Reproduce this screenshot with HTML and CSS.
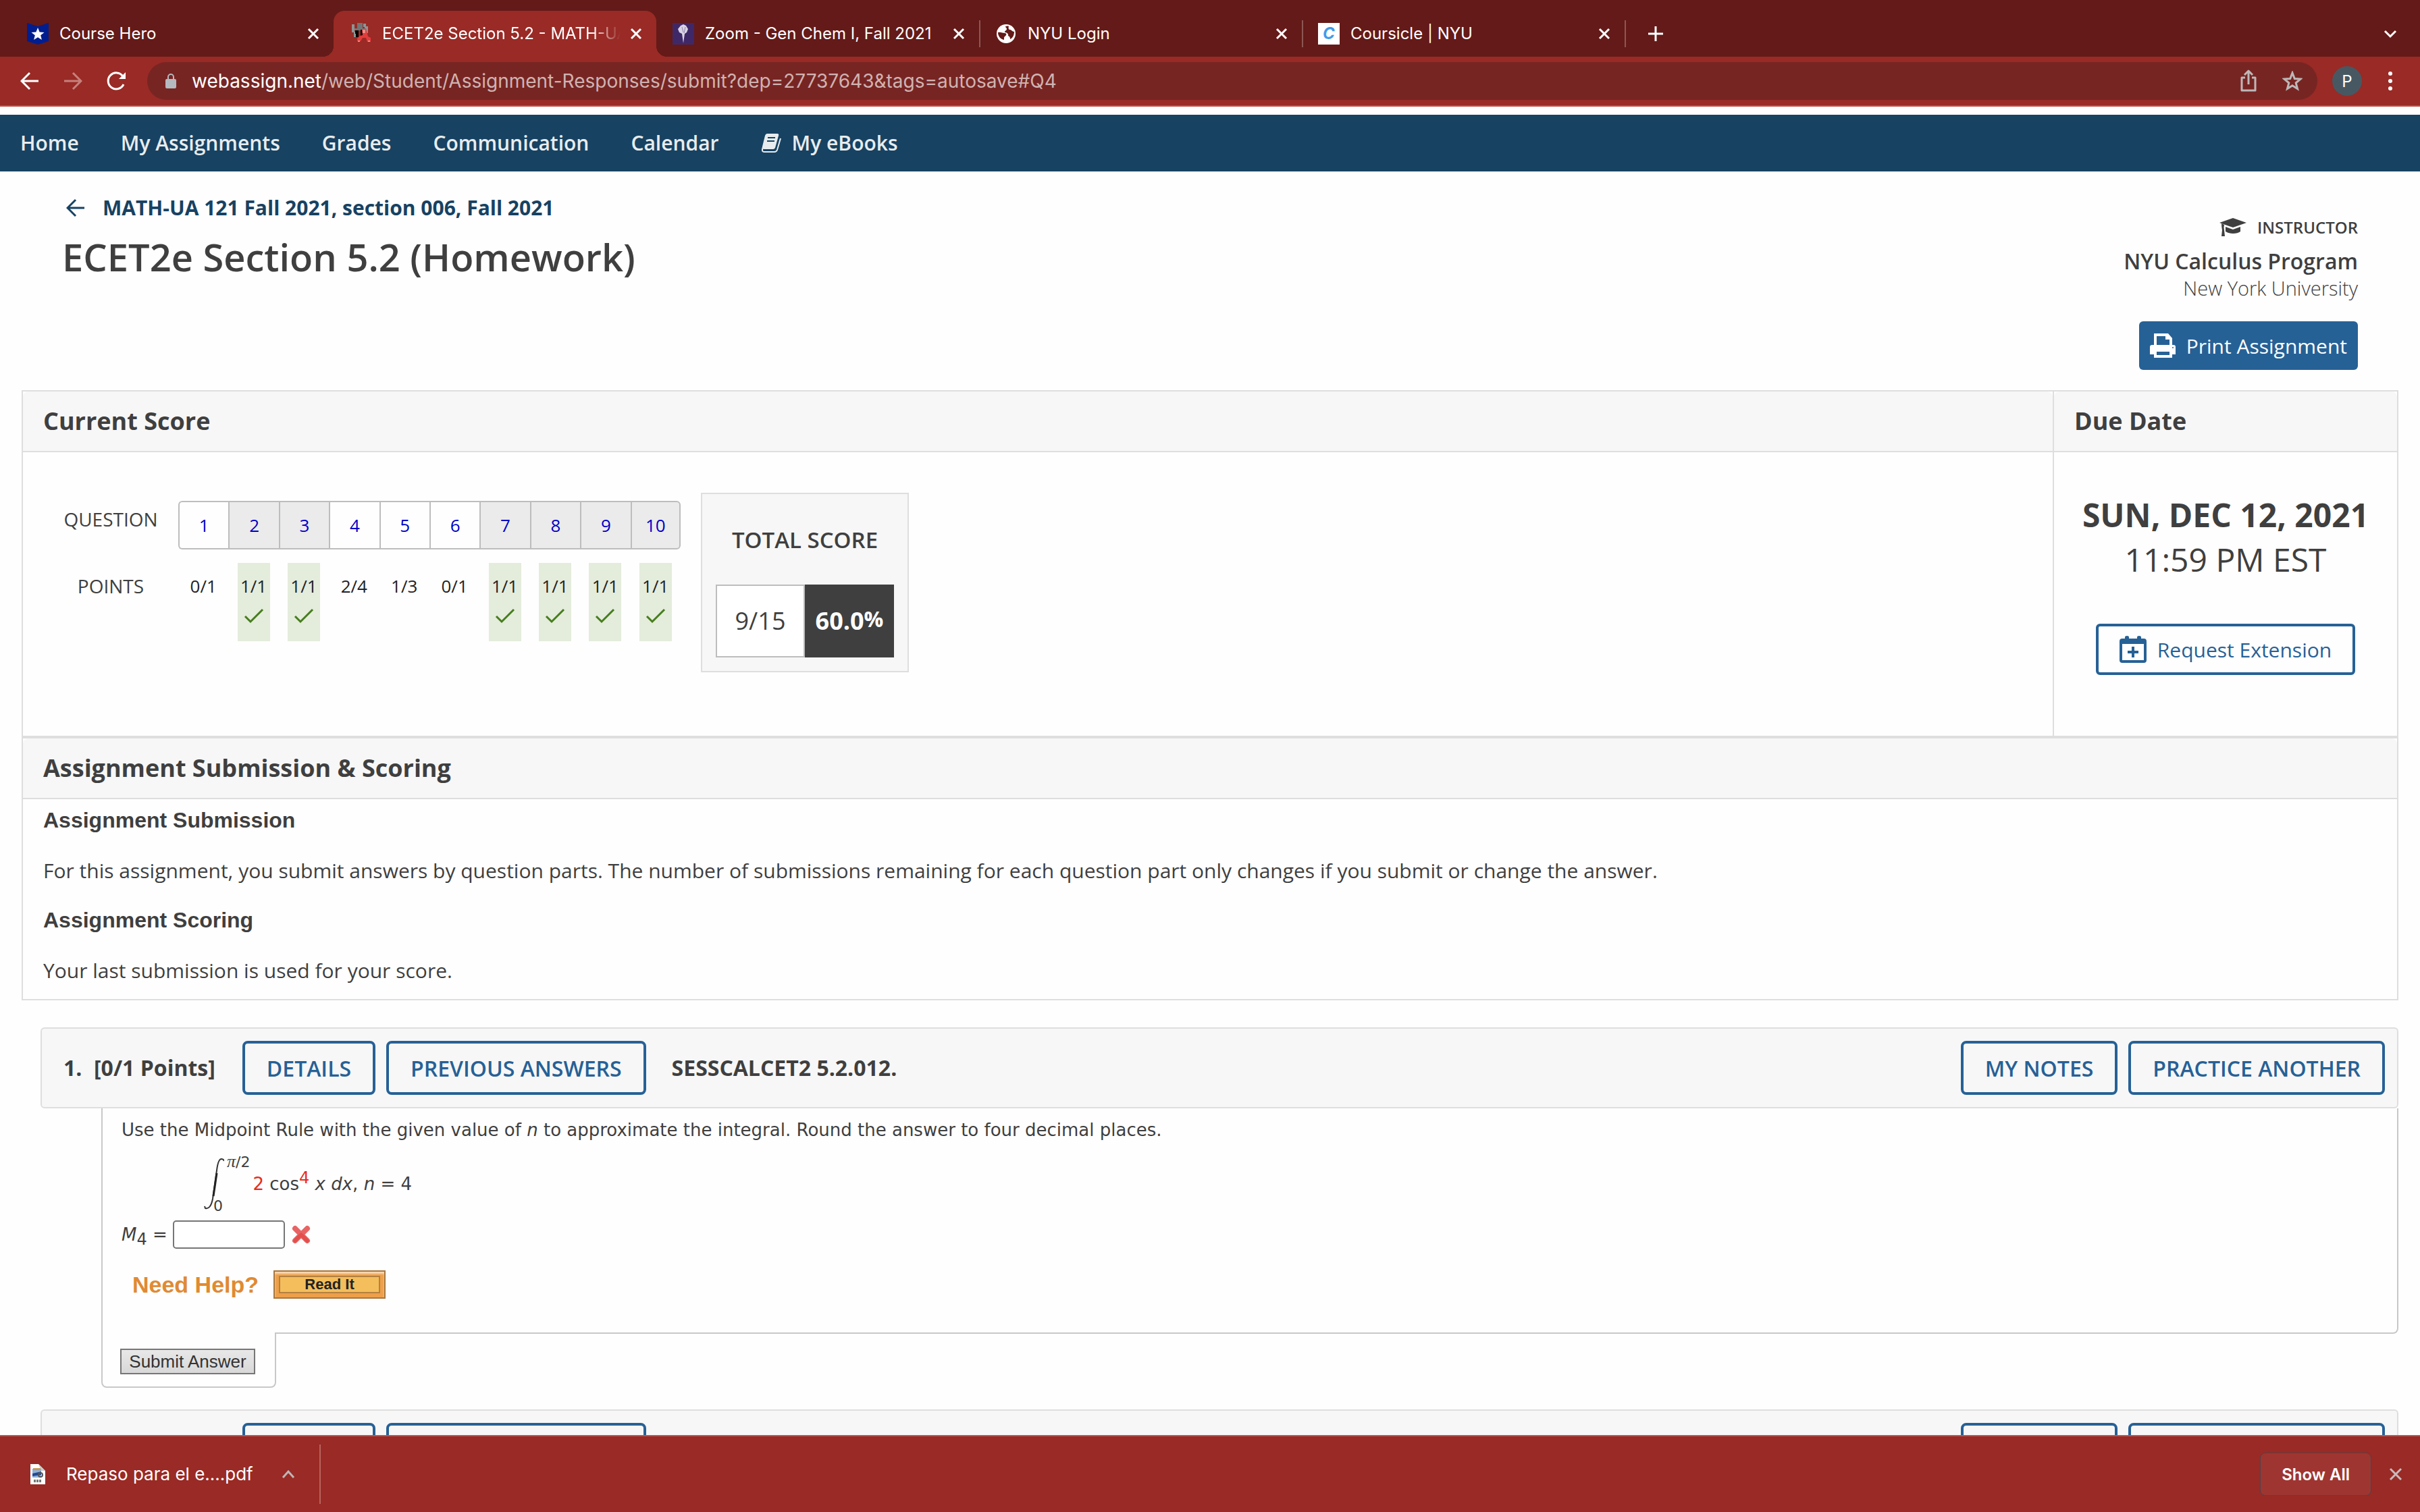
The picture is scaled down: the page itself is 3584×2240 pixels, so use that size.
FILE: index.html
```html
<!DOCTYPE html>
<html lang="en">
<head>
<meta charset="utf-8">
<title>ECET2e Section 5.2 - MATH-UA 121 Fall 2021</title>
<link rel="stylesheet" href="styles.css">
</head>
<body>

<!-- browser tabs -->
<div class="tabs">
	<div class="tab">
		<svg class="favicon" viewBox="0 0 32 32"><path d="M0 0L16 5L32 0V27L16 32L0 27Z" fill="#001e8f"/><path d="M16 7l2.600 6.400 6.900.500-5.300 4.400 1.700 6.700-5.900-3.700-5.900 3.700 1.700-6.700-5.300-4.400 6.900-.500z" fill="#fff"/></svg>
		<span class="tab-title">Course Hero</span>
		<button class="x" aria-label="Close tab"><svg viewBox="0 0 18 18"><path d="M2 2L16 16M16 2L2 16"/></svg></button>
	</div>
	<div class="tab active">
		<svg class="favicon" viewBox="0 0 32 32">
			<path d="M3 2h4v11h3v8H6V14H3zM20 1h4v4h3v10h-3v4h-4v-6h2V6h-2z" fill="#8d9494"/>
			<path d="M11 0h8v10h-8zM7 8h16v3H7z" fill="#6f7777"/>
			<path d="M8 11h5v10H9v-5H8zM16 10h5v6h-2v5h-3z" fill="#000"/>
			<path d="M18 10l6-2 3 12 4 2v6h-5l-2-6h-5l-3 5h-5v-4l4-4 4-1z" fill="#e23c3c"/>
			<path d="M19 10h4v5h-4zM12 26h3v2h-3zM27 26h3v2h-3z" fill="#f08a86"/>
		</svg>
		<span class="tab-title">ECET2e Section 5.2 - MATH-UA</span>
		<button class="x" aria-label="Close tab"><svg viewBox="0 0 18 18"><path d="M2 2L16 16M16 2L2 16"/></svg></button>
	</div>
	<div class="tab">
		<svg class="favicon" viewBox="0 0 32 32"><path d="M0 0h32v32H0z" fill="#3f2867"/><path d="M12 4l4-2 4 2 3 5-2 5-3 2-2 14-2-14-4-2-2-5z" fill="#d9d4e4"/><path d="M14 6l2 8M19 6l-2 9" stroke="#8f83ab" stroke-width="1"/></svg>
		<span class="tab-title">Zoom - Gen Chem I, Fall 2021</span>
		<button class="x" aria-label="Close tab"><svg viewBox="0 0 18 18"><path d="M2 2L16 16M16 2L2 16"/></svg></button>
	</div>
	<div class="tab line">
		<svg class="favicon" viewBox="0 0 32 32"><circle cx="16" cy="16" r="14" fill="#fff"/><path d="M4 14c4-1 7 1 10 1 2 0 3 2 2 3-1 2-3 2-3 4v3c-5-1-9-5-9-11z" fill="#641a18"/><path d="M15 5c2 0 3-1 5 0-1 3 0 5 2 5s3 3 6 3c0 5-2 9-6 11 0-3-1-4-3-5 1-3-2-5-5-5 0-3 3-3 3-5s-2-2-2-4z" fill="#641a18"/></svg>
		<span class="tab-title">NYU Login</span>
		<button class="x" aria-label="Close tab"><svg viewBox="0 0 18 18"><path d="M2 2L16 16M16 2L2 16"/></svg></button>
	</div>
	<div class="tab line">
		<span class="favicon coursicle">C</span>
		<span class="tab-title">Coursicle | NYU</span>
		<button class="x" aria-label="Close tab"><svg viewBox="0 0 18 18"><path d="M2 2L16 16M16 2L2 16"/></svg></button>
	</div>
	<button class="new-tab line" aria-label="New tab"><svg viewBox="0 0 24 24"><path d="M12 1V23M1 12H23"/></svg></button>
	<button class="tab-menu" aria-label="Search tabs"><svg viewBox="0 0 20 14"><path d="M2 3L10 11L18 3"/></svg></button>
</div>

<!-- address bar -->
<div class="toolbar">
	<button aria-label="Back"><svg width="28" height="28" viewBox="0 0 28 28"><path d="M27 14H3M14 2L2 14L14 26" stroke="#fff" stroke-width="3" fill="none"/></svg></button>
	<button aria-label="Forward"><svg width="28" height="28" viewBox="0 0 28 28"><path d="M1 14H25M14 2L26 14L14 26" stroke="#c8807b" stroke-width="3" fill="none"/></svg></button>
	<button aria-label="Reload"><svg width="30" height="30" viewBox="0 0 30 30"><path d="M25 20A12 12 0 1 1 24 8" stroke="#fff" stroke-width="3" fill="none"/><path d="M28 2V12H18Z" fill="#fff"/></svg></button>
	<div class="address">
		<svg width="18" height="24" viewBox="0 0 18 24"><rect x="1" y="9" width="16" height="14" rx="2" fill="#b5b9c0"/><path d="M5 10V6a4 4 0 0 1 8 0V10" stroke="#b5b9c0" stroke-width="2" fill="none"/></svg>
		<span class="url">webassign.net<span>/web/Student/Assignment-Responses/submit?dep=27737643&amp;tags=autosave#Q4</span></span>
		<svg width="24" height="34" viewBox="0 0 24 34"><path d="M7 12H2V31H22V12H17M12 22V3M6 8L12 2L18 8" stroke="#bdb8b8" stroke-width="3" fill="none" stroke-linejoin="round"/></svg>
		<svg width="30" height="30" viewBox="0 0 30 30"><path d="M15 3L18.300 11.500L27 12L20.200 17.800L22.500 26.500L15 21.700L7.500 26.500L9.800 17.800L3 12L11.700 11.500Z" stroke="#bdb8b8" stroke-width="3" fill="none"/></svg>
	</div>
	<button class="avatar">P</button>
	<button aria-label="Menu"><svg width="8" height="30" viewBox="0 0 8 30" fill="#fff"><circle cx="4" cy="4" r="3"/><circle cx="4" cy="15" r="3"/><circle cx="4" cy="26" r="3"/></svg></button>
</div>

<main>
	<nav>
		<a href="#">Home</a>
		<a href="#">My Assignments</a>
		<a href="#">Grades</a>
		<a href="#">Communication</a>
		<a href="#">Calendar</a>
		<a href="#"><svg width="30" height="30" viewBox="0 0 30 30"><path d="M9 1H24Q27 1 26 4L21 22Q20 24 18 24H5Q1 24 2 20L6 4Q7 1 9 1Z" fill="#e8ecee"/><path d="M3 21Q0 28 5 28H20Q23 28 24 25L29 8" stroke="#e8ecee" stroke-width="2" fill="none"/><path d="M10 7H21M9 12H20" stroke="#174262" stroke-width="2"/></svg>My eBooks</a>
	</nav>

	<header>
		<div class="heading">
			<a href="#" class="back"><svg width="28" height="28" viewBox="0 0 28 28"><path d="M27 14H3M14 2L2 14L14 26" stroke="#174262" stroke-width="3" fill="none"/></svg>MATH-UA 121 Fall 2021, section 006, Fall 2021</a>
			<h1>ECET2e Section 5.2 (Homework)</h1>
		</div>
		<div class="instructor">
			<div class="role"><svg width="40" height="28" viewBox="0 0 40 28" fill="#3f3f3f"><path d="M20 0L40 7L20 14L0 7Z"/><path d="M9 13L20 17L31 13V20Q27 23 20 23T9 20Z"/><path d="M3 8L7 10Q6 14 7 18L8 27H3L4 18Q3 13 3 8Z"/></svg>INSTRUCTOR</div>
			<div class="name">NYU Calculus Program</div>
			<div class="school">New York University</div>
			<button class="print"><svg width="38" height="36" viewBox="0 0 38 36"><path d="M6 0H27L33 7V17H35Q38 17 38 20V31H33V36H6V31H0V20Q0 17 3 17H6ZM10 4V17H29V9H23V4ZM10 27V32H29V27Z" fill="#fff" fill-rule="evenodd"/><circle cx="34" cy="21" r="1" fill="#266196"/></svg>Print Assignment</button>
		</div>
	</header>

	<section class="panel">
		<div class="columns">
			<div class="score">
				<h2>Current Score</h2>
				<div class="score-body">
					<table class="points">
						<tr class="questions">
							<th>QUESTION</th>
							<td><a href="#">1</a></td>
							<td class="done"><a href="#">2</a></td>
							<td class="done"><a href="#">3</a></td>
							<td><a href="#">4</a></td>
							<td><a href="#">5</a></td>
							<td><a href="#">6</a></td>
							<td class="done"><a href="#">7</a></td>
							<td class="done"><a href="#">8</a></td>
							<td class="done"><a href="#">9</a></td>
							<td class="done"><a href="#">10</a></td>
						</tr>
						<tr class="results">
							<th>POINTS</th>
							<td><div>0/1</div></td>
							<td><div class="full">1/1<svg viewBox="0 0 30 24"><path d="M2 13L10 21L28 3"/></svg></div></td>
							<td><div class="full">1/1<svg viewBox="0 0 30 24"><path d="M2 13L10 21L28 3"/></svg></div></td>
							<td><div>2/4</div></td>
							<td><div>1/3</div></td>
							<td><div>0/1</div></td>
							<td><div class="full">1/1<svg viewBox="0 0 30 24"><path d="M2 13L10 21L28 3"/></svg></div></td>
							<td><div class="full">1/1<svg viewBox="0 0 30 24"><path d="M2 13L10 21L28 3"/></svg></div></td>
							<td><div class="full">1/1<svg viewBox="0 0 30 24"><path d="M2 13L10 21L28 3"/></svg></div></td>
							<td><div class="full">1/1<svg viewBox="0 0 30 24"><path d="M2 13L10 21L28 3"/></svg></div></td>
						</tr>
					</table>
					<div class="total">
						<h3>TOTAL SCORE</h3>
						<div class="total-values">
							<span>9/15</span>
							<strong>60.0<small>%</small></strong>
						</div>
					</div>
				</div>
			</div>
			<div class="due">
				<h2>Due Date</h2>
				<div class="due-body">
					<strong>SUN, DEC 12, 2021</strong>
					<span>11:59 PM EST</span>
					<button class="extension"><svg width="40" height="40" viewBox="0 0 40 40"><path d="M4 4H8V2Q8 0 11 0T14 2V4H26V2Q26 0 29 0T32 2V4H36Q40 4 40 8V36Q40 40 36 40H4Q0 40 0 36V8Q0 4 4 4ZM4 12V36H36V12ZM18 16H22V22H28V26H22V32H18V26H12V22H18Z" fill="#266196" fill-rule="evenodd"/></svg>Request Extension</button>
				</div>
			</div>
		</div>
		<div class="scoring">
			<h2>Assignment Submission &amp; Scoring</h2>
			<div class="scoring-body">
				<h3>Assignment Submission</h3>
				<p>For this assignment, you submit answers by question parts. The number of submissions remaining for each question part only changes if you submit or change the answer.</p>
				<h3>Assignment Scoring</h3>
				<p>Your last submission is used for your score.</p>
			</div>
		</div>
	</section>

	<section class="question">
		<div class="question-header">
			<span class="number">1.</span>
			<span class="worth">[0/1 Points]</span>
			<button>DETAILS</button>
			<button>PREVIOUS ANSWERS</button>
			<span class="code">SESSCALCET2 5.2.012.</span>
			<button>MY NOTES</button>
			<button>PRACTICE ANOTHER</button>
		</div>
		<div class="question-body">
			<p>Use the Midpoint Rule with the given value of <i>n</i> to approximate the integral. Round the answer to four decimal places.</p>
			<div class="integral">
				<svg width="30" height="76" viewBox="0 0 30 76"><path d="M30 4Q29 1 26 1Q21 1 19 18L13 60Q10 76 2 74L1 71" stroke="#333" stroke-width="2" fill="none"/><path d="M19 22L14 56" stroke="#222" stroke-width="3"/></svg>
				<div class="limits"><span class="upper"><i>π</i>/2</span><span>0</span></div>
				<div><b>2</b> cos<sup>4</sup> <i>x dx</i>, <i>n</i> = 4</div>
			</div>
			<div class="answer">
				<label for="m4"><i>M</i><sub>4</sub> =</label>
				<input id="m4" type="text">
				<svg width="28" height="28" viewBox="0 0 28 28"><path d="M5 5L23 23M23 5L5 23" stroke="#e86464" stroke-width="8" stroke-linecap="round"/><path d="M14 14L23 23M14 14L5 23" stroke="#e24f4c" stroke-width="5" stroke-linecap="round"/></svg>
			</div>
			<div class="help">
				<span>Need Help?</span>
				<button>Read It</button>
			</div>
		</div>
		<div class="submit"><button>Submit Answer</button></div>
	</section>

	<section class="question">
		<div class="question-header">
			<span class="number">2.</span>
			<span class="worth">[1/1 Points]</span>
			<button>DETAILS</button>
			<button>PREVIOUS ANSWERS</button>
			<span class="code"></span>
			<button>MY NOTES</button>
			<button>PRACTICE ANOTHER</button>
		</div>
	</section>
</main>

<!-- download shelf -->
<footer>
	<svg width="24" height="30" viewBox="0 0 24 30"><path d="M1 0H13L23 10V30H1Z" fill="#fff"/><path d="M13 0L23 10H17Z" fill="#ccc"/><path d="M4 7H17V20H4Z" fill="#8fb2dd"/><path d="M5 6H16V9H5Z" fill="#c79a55"/><path d="M4 14L17 11V16L4 18Z" fill="#24498f"/><circle cx="16" cy="16" r="3" fill="none" stroke="#555" stroke-width="2"/><path d="M6 25H18" stroke="#777" stroke-width="4" stroke-dasharray="3 1"/></svg>
	<span class="file">Repaso para el e....pdf</span>
	<button aria-label="File options"><svg width="20" height="14" viewBox="0 0 20 14"><path d="M2 12L10 3L18 12" stroke="#bfb5b5" stroke-width="3" fill="none"/></svg></button>
	<button class="show-all">Show All</button>
	<button aria-label="Close"><svg width="20" height="20" viewBox="0 0 20 20"><path d="M2 2L18 18M18 2L2 18" stroke="#c9b9b9" stroke-width="3"/></svg></button>
</footer>

</body>
</html>
```
FILE: styles.css
```css
* {box-sizing:border-box;}
body {margin:0;
	height:100vh;
	display:flex;
	flex-direction:column;
	overflow:hidden;
	background-color:#fefefe;
	color:#3f3f3f;
	font-family:"Open Sans", sans-serif;
	font-size:30px;
	line-height:40px;}
h1, h2, h3, p {margin:0;}
a {text-decoration:none;}
button {margin:0;
	padding:0;
	border:0;
	background:none;
	font-family:inherit;
	cursor:pointer;}
svg {display:block;
	flex:none;}

/* tabs */
.tabs {display:flex;
	align-items:flex-end;
	height:84px;
	flex:none;
	padding-left:16px;
	background-color:#641a18;
	color:#fff;
	font-family:Inter, sans-serif;
	font-size:24px;}
.tab {position:relative;
	display:flex;
	align-items:center;
	width:478px;
	height:68px;
	padding:0 21px 0 24px;}
.tab.active {background-color:#992a25;
	border-radius:16px 16px 0 0;}
.tab.active:before, .tab.active:after {content:"";
	position:absolute;
	bottom:0;
	width:16px;
	height:16px;}
.tab.active:before {left:-16px;
	background:radial-gradient(circle at 0 0, transparent 16px, #992a25 16px);}
.tab.active:after {right:-16px;
	background:radial-gradient(circle at 100% 0, transparent 16px, #992a25 16px);}
.line:before {content:"";
	position:absolute;
	left:0;
	top:14px;
	width:2px;
	height:40px;
	background-color:#8b5755;}
.favicon {width:32px;
	height:32px;
	flex:none;}
.coursicle {background-color:#fff;
	color:#3f9bea;
	font-weight:bold;
	font-style:italic;
	line-height:32px;
	text-align:center;}
.tab-title {flex:1;
	margin:0 14px 0 16px;
	overflow:hidden;
	white-space:nowrap;}
.active .tab-title {-webkit-mask-image:linear-gradient(to right, #000 88%, transparent);
	mask-image:linear-gradient(to right, #000 88%, transparent);}
.x svg {width:18px;
	height:18px;
	stroke:#fff;
	stroke-width:3;}
.new-tab {position:relative;
	height:68px;
	padding:0 34px;}
.new-tab svg {width:24px;
	height:24px;
	stroke:#fff;
	stroke-width:3;}
.tab-menu {height:68px;
	margin-left:auto;
	padding:0 34px;}
.tab-menu svg {width:20px;
	height:14px;
	stroke:#fff;
	stroke-width:3;
	fill:none;}

/* toolbar */
.toolbar {display:flex;
	align-items:center;
	height:74px;
	flex:none;
	padding:0 40px 0 30px;
	border-bottom:2px solid #b9524e;
	background-color:#992a25;
	font-family:Inter, sans-serif;}
.toolbar > button {margin-right:36px;}
.toolbar > button:last-child {margin-right:0;}
.address {display:flex;
	align-items:center;
	flex:1;
	height:56px;
	margin:0 22px 0 -6px;
	padding:0 22px 0 26px;
	border-radius:28px;
	background-color:#772523;}
.address svg + svg, .url + svg {margin-left:38px;}
.url {flex:1;
	margin-left:22px;
	color:#fff;
	font-size:28px;}
.url span {color:#d0b3b1;}
.toolbar .avatar {width:44px;
	height:44px;
	margin-right:38px;
	border-radius:50%;
	background-color:#485862;
	color:#fff;
	font-size:24px;}

/* page */
main {flex:1;
	min-height:0;
	overflow:hidden;
	padding-top:12px;}
nav {display:flex;
	align-items:center;
	gap:62px;
	height:84px;
	padding:0 30px;
	background-color:#174262;}
nav a {display:flex;
	align-items:center;
	gap:16px;
	color:#e8ecee;
	font-weight:600;}
header {display:flex;
	justify-content:space-between;
	padding:34px 92px 30px 92px;}
.back {display:flex;
	align-items:center;
	gap:26px;
	padding-left:6px;
	color:#174262;
	font-weight:bold;}
h1 {margin-top:12px;
	font-size:56px;
	font-weight:600;
	line-height:80px;}
.instructor {display:flex;
	flex-direction:column;
	align-items:flex-end;
	padding-top:33px;}
.role {display:flex;
	align-items:center;
	gap:16px;
	font-size:24px;
	font-weight:600;
	line-height:32px;}
.name {margin-top:12px;
	font-size:32px;
	font-weight:600;
	line-height:44px;}
.school {font-size:29px;
	font-weight:300;
	line-height:36px;}
.print {display:flex;
	align-items:center;
	gap:16px;
	height:72px;
	margin-top:31px;
	padding:0 16px;
	border-radius:6px;
	background-color:#266196;
	color:#fff;
	font-size:30px;}

/* score panel */
.panel {margin:0 32px;
	border:2px solid #dedede;}
h2 {padding:0 30px;
	border-bottom:2px solid #dedede;
	border-radius:8px 8px 0 0;
	background-color:#f7f7f7;
	font-size:36px;
	line-height:88px;}
.columns {display:flex;
	border-bottom:4px solid #dedede;}
.score {flex:1;}
.due {width:510px;
	border-left:2px solid #dedede;}
.score-body {display:flex;
	align-items:flex-start;
	height:420px;
	padding:60px 30px;}
.points {width:944px;
	margin:12px 30px 0 0;
	border-spacing:0;
	table-layout:fixed;
	text-align:center;
	font-size:26px;}
.points th {width:200px;
	padding:0;
	vertical-align:top;
	font-size:28px;
	font-weight:normal;}
.questions th {line-height:54px;}
.questions td {height:72px;
	padding:0;
	border:2px solid #bdbdbd;
	border-right-width:0;}
.questions td:nth-child(2) {border-radius:6px 0 0 6px;}
.questions td:last-child {border-right-width:2px;
	border-radius:0 6px 6px 0;}
.questions .done {background-color:#ebebeb;}
.questions a {color:#0000c8;}
.points .results th {padding-top:34px;
	line-height:40px;}
.results td {padding:20px 0 0;
	color:#222;}
.results div {width:48px;
	height:116px;
	margin:0 auto;
	padding-top:14px;}
.results .full {background-color:#e4ecdc;}
.results svg {width:30px;
	height:24px;
	margin:12px auto 0;
	stroke:#467d1c;
	stroke-width:3;
	fill:none;}
.total {width:308px;
	padding:48px 20px 20px;
	border:2px solid #dedede;
	background-color:#f7f7f7;
	text-align:center;}
.total h3 {font-size:33px;
	font-weight:600;}
.total-values {display:flex;
	height:108px;
	margin-top:46px;
	font-size:36px;
	line-height:104px;}
.total-values span {width:132px;
	border:2px solid #bdbdbd;
	background-color:#fff;}
.total-values strong {width:132px;
	padding-top:2px;
	background-color:#3f3f3f;
	color:#fff;}
.total-values small {font-size:32px;
	line-height:32px;
	vertical-align:4px;}
.due-body {display:flex;
	flex-direction:column;
	align-items:center;
	padding-top:60px;
	font-size:48px;
	line-height:66px;}
.extension {display:flex;
	align-items:center;
	gap:16px;
	height:76px;
	margin-top:62px;
	padding:0 31px;
	border:4px solid #266196;
	border-radius:6px;
	color:#266196;
	font-size:30px;}
.scoring-body {padding:11px 30px 22px;}
.scoring-body h3 {font-family:"Liberation Sans", Arial, sans-serif;
	font-size:32px;}
.scoring-body p {margin:35px 0 33px;}
.scoring-body p:last-child {margin-bottom:0;}

/* questions */
.question {margin:40px 32px 32px 60px;}
.question + .question {margin-top:0;}
.question-header {display:flex;
	align-items:center;
	gap:16px;
	height:120px;
	padding:0 18px 0 32px;
	border:2px solid #dedede;
	border-radius:6px;
	background-color:#f7f7f7;
	font-size:32px;
	font-weight:bold;}
.number {width:29px;}
.worth {margin-right:24px;}
.code {flex:1;
	margin-left:22px;}
.question-header button {height:80px;
	padding:0 32px;
	border:4px solid #266196;
	border-radius:8px;
	color:#266196;
	font-size:32px;
	font-weight:600;}
.question-body {margin-left:90px;
	padding:14px 28px 50px;
	border:2px solid #c8c8c8;
	border-top:0;
	border-radius:0 0 8px 0;
	font-family:"DejaVu Sans", Verdana, sans-serif;
	font-size:26px;
	line-height:36px;}
.integral {display:flex;
	align-items:center;
	height:92px;
	margin:16px 0 8px 122px;}
.limits {display:flex;
	flex-direction:column;
	justify-content:space-between;
	height:92px;
	margin:0 4px 0 -16px;
	font-size:22px;
	line-height:26px;}
.upper {padding-left:20px;}
.upper i {font-family:"Liberation Serif", serif;
	font-size:26px;}
.integral b, .integral sup {color:#e82c20;
	font-weight:normal;}
sup, sub {font-size:24px;
	line-height:0;}
.answer {display:flex;
	align-items:center;}
.answer input {width:166px;
	height:42px;
	margin:0 10px 0 8px;
	border:2px solid #767676;
	border-radius:5px;
	background-color:#fff;
	font-size:26px;}
.help {display:flex;
	align-items:center;
	gap:22px;
	margin:32px 0 0 16px;
	color:#e08a33;
	font-family:"Liberation Sans", Arial, sans-serif;
	font-size:34px;
	font-weight:bold;}
.help button {width:166px;
	height:42px;
	border:2px solid #a8763c;
	background-color:#f4be5c;
	box-shadow:inset 0 3px 3px #f8dcbc, inset 0 0 0 6px #ee9f48, inset 0 0 0 8px #b5803f;
	color:#222;
	font-size:22px;
	font-weight:bold;}
.submit {position:relative;
	width:259px;
	height:82px;
	margin:-2px 0 0 90px;
	padding:24px 26px;
	border:2px solid #c8c8c8;
	border-top:0;
	border-radius:0 0 8px 8px;
	background-color:#fefefe;
	line-height:0;}
.submit button {width:200px;
	height:38px;
	border:2px solid #767676;
	background-image:linear-gradient(#e8e8e8, #d8d8d8);
	color:#333;
	font-family:"Liberation Sans", Arial, sans-serif;
	font-size:26px;}

/* downloads */
footer {display:flex;
	align-items:center;
	height:114px;
	flex:none;
	padding:0 26px 0 44px;
	border-top:2px solid #b5554f;
	background-color:#992a25;
	color:#fff;
	font-family:Inter, sans-serif;
	font-size:26px;}
.file {margin:0 42px 0 30px;}
.file + button {height:88px;
	padding-right:36px;
	border-right:2px solid #b8645f;}
.show-all {height:64px;
	margin:0 26px 0 auto;
	padding:0 31px;
	border:1px solid #554048;
	border-radius:8px;
	background-color:#9f3530;
	color:#fff;
	font-size:24px;
	font-weight:600;}
```
